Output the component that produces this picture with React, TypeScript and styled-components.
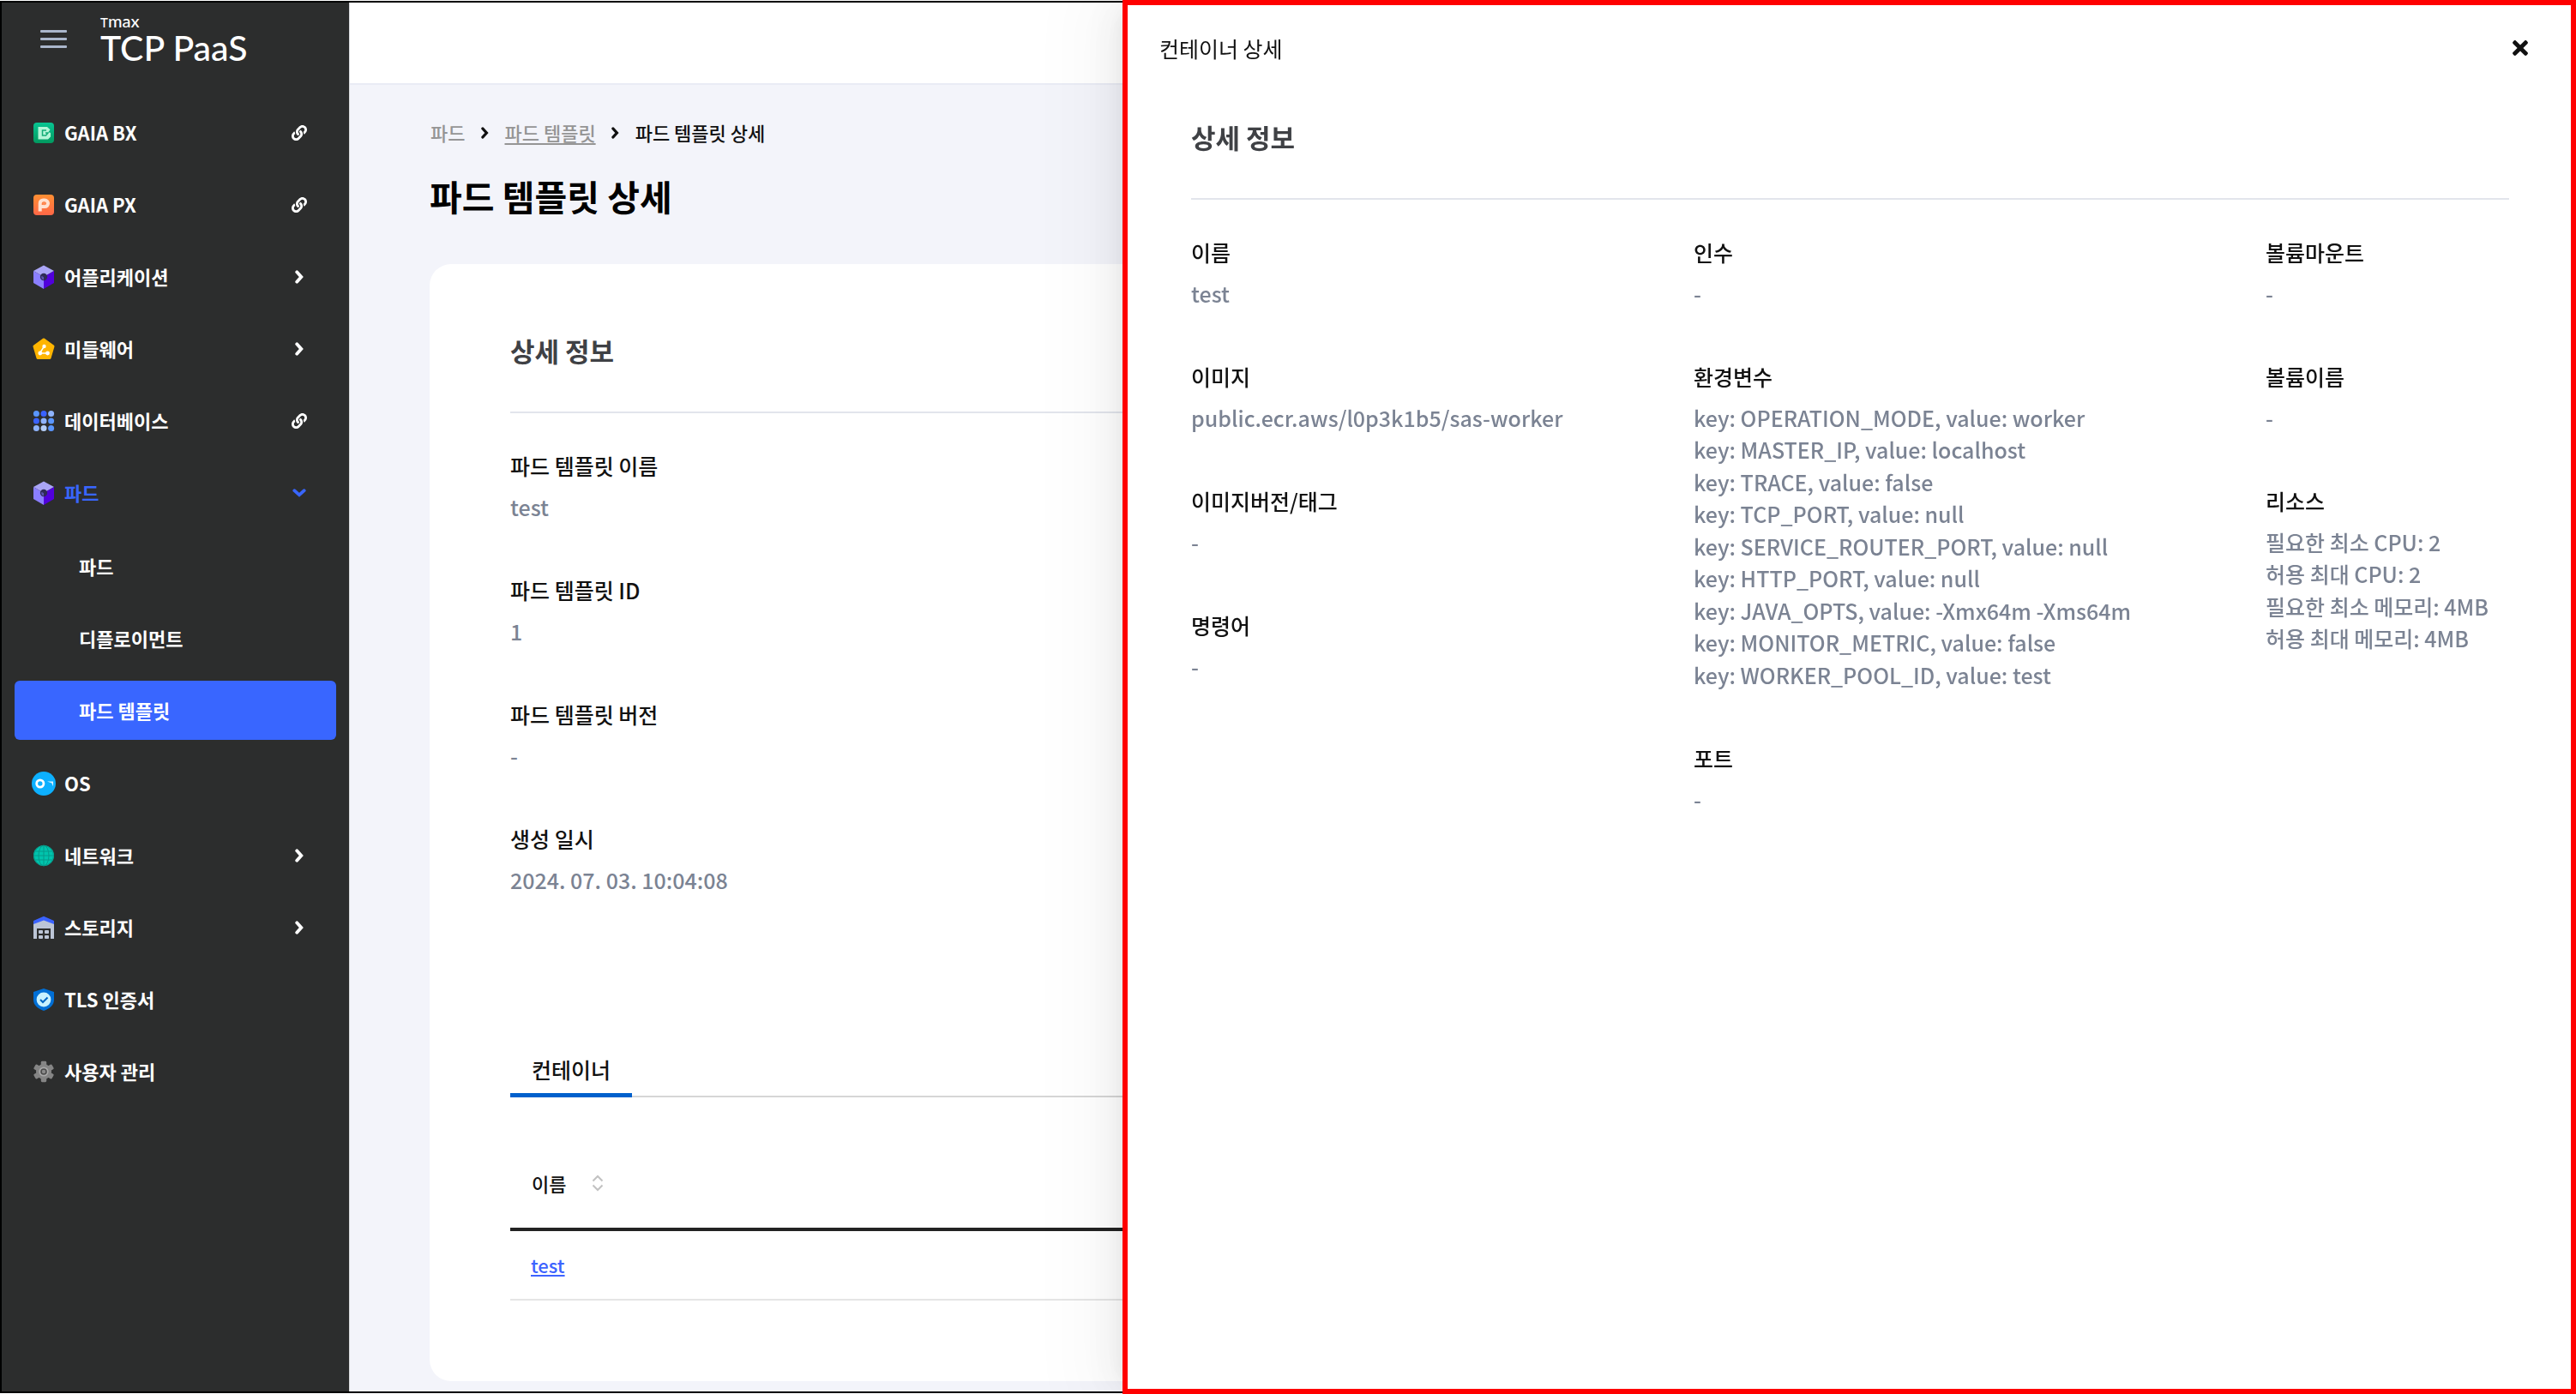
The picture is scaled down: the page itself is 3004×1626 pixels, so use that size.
import React from "react";
import styled, { createGlobalStyle } from "styled-components";
import { FaLink, FaTimes } from "react-icons/fa";

const GlobalStyle = createGlobalStyle`
  *, *::before, *::after { box-sizing: border-box; }
  body {
    margin: 0;
    background: #ffffff;
    color: #111111;
    font-family: "Noto Sans CJK KR", "Noto Sans", sans-serif;
    font-size: 25px;
    line-height: 1.5;
  }
  h1, h2, p, dl, dd, ul, ol { margin: 0; padding: 0; }
  ul, ol { list-style: none; }
  button { border: 0; padding: 0; background: none; color: inherit; font: inherit; cursor: pointer; }
`;

/* ---------- frame ---------- */

const Frame = styled.div`
  display: flex;
  min-height: calc(100vh - 2px);
  margin: 1px 0;
  border: 2px solid #000000;
  border-right: 0;
`;

/* ---------- sidebar ---------- */

const Sidebar = styled.aside`
  flex: 0 0 406px;
  padding: 0 15px;
  background: #2c2d2d;
  border-right: 1px solid #d9dadd;
  color: #ffffff;
`;

const Brand = styled.div`
  display: flex;
  align-items: flex-start;
  gap: 39px;
  padding: 11px 0 0 30px;
  height: 117px;
`;

const MenuButton = styled.button`
  display: grid;
  gap: 6px;
  width: 31px;
  margin-top: 21px;
`;

const MenuLine = styled.span`
  height: 3px;
  border-radius: 1px;
  background: #aab6cb;
`;

const Logo = styled.a`
  display: flex;
  flex-direction: column;
  color: #ffffff;
  font-family: "Lato Medium", Lato, sans-serif;
  font-weight: 500;
  text-decoration: none;
`;

const LogoSmall = styled.span`
  font-size: 20px;
  line-height: 20px;
`;

const LogoCap = styled.span`
  font-size: 15px;
`;

const LogoBig = styled.span`
  font-size: 41px;
  line-height: 40px;
`;

const NavList = styled.ul`
  display: grid;
  gap: 15px;
`;

const SubList = styled(NavList)`
  margin: 17px 0 1px;
`;

const NavRow = styled.a<{ $active?: boolean; $open?: boolean; $sub?: boolean }>`
  display: flex;
  align-items: center;
  gap: 10px;
  width: 100%;
  height: 69px;
  padding: 0 34px 0 ${(p) => (p.$sub ? 75 : 20)}px;
  border-radius: 6px;
  background: ${(p) => (p.$active ? "#3966ff" : "transparent")};
  color: ${(p) => (p.$open ? "#3966ff" : "#ffffff")};
  font-size: 22px;
  font-weight: 700;
  line-height: 33px;
  text-align: left;
  text-decoration: none;
`;

const NavLabel = styled.span`
  flex: 1;
`;

const NavMark = styled.span`
  display: flex;
  justify-content: center;
  width: 18px;
  font-size: 18px;
`;

const NavIcon = styled.svg`
  flex: none;
  width: 28px;
  height: 28px;
`;

/* ---------- main page ---------- */

const Main = styled.div`
  flex: 1;
  min-width: 0;
  background: #f3f4fa;
`;

const TopBar = styled.header`
  height: 96px;
  background: #ffffff;
  border-bottom: 2px solid #e9ebf5;
`;

const Content = styled.main`
  padding: 39px 93px 12px;
`;

const Crumbs = styled.ol`
  display: flex;
  align-items: center;
  gap: 18px;
  padding-left: 1px;
  font-size: 22px;
  font-weight: 500;
  line-height: 33px;
`;

const Crumb = styled.li<{ $muted?: boolean }>`
  color: ${(p) => (p.$muted ? "#959595" : "#111111")};
`;

const CrumbLink = styled.a`
  color: inherit;
  text-underline-offset: 3px;
`;

const CrumbMark = styled.li`
  display: flex;
  justify-content: center;
  width: 10px;
`;

const PageTitle = styled.h1`
  margin: 27px 0 49px;
  color: #000000;
  font-size: 41px;
  font-weight: 700;
  line-height: 61px;
`;

const Card = styled.section`
  padding: 78px 94px 94px;
  border-radius: 25px;
  background: #ffffff;
`;

const SectionTitle = styled.h2`
  padding-bottom: 48px;
  border-bottom: 2px solid #e2e5ec;
  color: #3f4145;
  font-size: 31px;
  font-weight: 700;
  line-height: 46px;
`;

const Details = styled.dl`
  display: grid;
  align-content: start;
  gap: 60px;
`;

const Detail = styled.div`
  display: grid;
  gap: 10px;
`;

const Term = styled.dt`
  color: #111111;
  font-weight: 500;
`;

const Value = styled.dd`
  color: #7b8393;
  font-weight: 500;
`;

const CardDetails = styled.div`
  padding-top: 43px;
`;

const Tabs = styled.div`
  display: flex;
  margin-top: 175px;
  box-shadow: inset 0 -2px #d6d6d6;
`;

const Tab = styled.button`
  padding: 8px 25px 9px;
  border-bottom: 5px solid #0060cc;
  font-weight: 500;
  line-height: 38px;
`;

const Table = styled.table`
  width: 100%;
  margin-top: 51px;
  border-collapse: separate;
  border-spacing: 0;
  font-size: 22px;
  line-height: 33px;
  text-align: left;
`;

const HeadCell = styled.th`
  height: 105px;
  padding: 0 25px 3px;
  border-bottom: 4px solid #222222;
  font-weight: 500;
`;

const SortButton = styled.button`
  display: flex;
  align-items: center;
  gap: 30px;
`;

const Cell = styled.td`
  height: 81px;
  padding: 0 24px;
  border-bottom: 2px solid #e5e5e5;
  font-weight: 500;
`;

const CellLink = styled.a`
  color: #3d63ff;
`;

/* ---------- drawer ---------- */

const Drawer = styled.aside`
  position: fixed;
  top: 0;
  right: 0;
  bottom: 0;
  width: 1695px;
  max-width: 100%;
  overflow: auto;
  border: 6px solid #ff0000;
  background: #ffffff;
  box-shadow:
    -9px 0 25px -12px rgba(0, 0, 0, 0.08),
    -14px 0 44px rgba(0, 0, 0, 0.05),
    -19px 0 75px 25px rgba(0, 0, 0, 0.03);
`;

const DrawerHead = styled.header`
  display: flex;
  align-items: center;
  justify-content: space-between;
  padding: 31px 50px 31px 37px;
  line-height: 38px;
`;

const CloseButton = styled.button`
  display: flex;
  justify-content: center;
  width: 18px;
  font-size: 26px;
`;

const DrawerBody = styled.div`
  padding: 31px 72px 31px 74px;
`;

const Columns = styled.div`
  display: grid;
  grid-template-columns: 586fr 667fr 284fr;
  padding-top: 43px;
`;

/* ---------- icons ---------- */

const Chevron = ({ height = 16, down = false }: { height?: number; down?: boolean }) => (
  <svg
    width={down ? height : (height * 10) / 16}
    height={down ? (height * 10) / 16 : height}
    viewBox={down ? "0 0 16 10" : "0 0 10 16"}
    fill="none"
    stroke="currentColor"
    strokeWidth="3.800"
    strokeLinecap="round"
    aria-hidden="true"
  >
    <path d={down ? "M2.300 2.200 8 7.300l5.700-5.100" : "M2.200 2.300 7.300 8l-5.100 5.700"} />
  </svg>
);

const BxIcon = () => (
  <NavIcon viewBox="0 0 28 28" aria-hidden="true">
    <defs>
      <linearGradient id="bx" x1="0" y1="0" x2="0" y2="1">
        <stop offset="0" stopColor="#08c592" />
        <stop offset="1" stopColor="#02995f" />
      </linearGradient>
    </defs>
    <rect x="2" y="2" width="24" height="24" rx="4" fill="url(#bx)" />
    <path d="M7.500 7H18l3.500 3.300-2 2.700 2.500 1v4.500L19 21.500H7.500z" fill="#b4f6d8" />
    <path d="M17 11h-4.500v6h4l2.500-3h-3" fill="none" stroke="#14ad77" strokeWidth="1.500" />
  </NavIcon>
);

const PxIcon = () => (
  <NavIcon viewBox="0 0 28 28" aria-hidden="true">
    <defs>
      <linearGradient id="px" x1="0" y1="0" x2="0" y2="1">
        <stop offset="0" stopColor="#ff8f33" />
        <stop offset="1" stopColor="#ff6747" />
      </linearGradient>
    </defs>
    <rect x="2" y="2" width="24" height="24" rx="4" fill="url(#px)" />
    <path d="M9.700 21.500V12a3.500 3.500 0 0 1 3.500-3.500h2a3.800 3.800 0 0 1 0 7.600h-5" fill="none" stroke="#ffe1d0" strokeWidth="4" />
    <circle cx="14.500" cy="12.200" r="2" fill="#ff8a55" />
  </NavIcon>
);

const CubeIcon = () => (
  <NavIcon viewBox="0 0 28 28" aria-hidden="true">
    <path d="M14 0.400 26 7 14 14 2 7z" fill="#aaa5f6" />
    <path d="M2 7l12 7v14L2 21z" fill="#8b7fff" />
    <path d="M26 7l-12 7v14l12-7z" fill="#5100dc" />
    <circle cx="14" cy="14" r="4.200" fill="#2e2b55" />
    <path d="M11.500 12.700l2.500 1.500v3.300a3.400 3.400 0 0 1-2.500-4.800z" fill="#5b53b0" />
  </NavIcon>
);

const MiddlewareIcon = () => (
  <NavIcon viewBox="0 0 28 28" aria-hidden="true">
    <path d="M14 3 25 11 21 24.500H7L3 11z" fill="#ffb500" stroke="#ffb500" strokeWidth="3" strokeLinejoin="round" />
    <path d="M14.500 11 10 18M10.500 19h8" fill="none" stroke="#ffffff" strokeWidth="1.400" />
    <circle cx="14.500" cy="11" r="2.200" fill="#ffffff" />
    <circle cx="9.800" cy="19" r="2.400" fill="#ffffff" />
    <circle cx="18.500" cy="19" r="2.400" fill="#ffffff" />
  </NavIcon>
);

const dotColors = ["#5a96ff", "#3a62ff", "#8fb3fb", "#3a62ff", "#8fb3fb", "#5a96ff", "#8fb3fb", "#b5cff8", "#5a96ff"];

const DatabaseIcon = () => (
  <NavIcon viewBox="0 0 28 28" aria-hidden="true">
    {dotColors.map((fill, i) => (
      <circle key={i} cx={5.400 + (i % 3) * 8.600} cy={5.400 + Math.floor(i / 3) * 8.600} r="3.500" fill={fill} />
    ))}
  </NavIcon>
);

const OsIcon = () => (
  <NavIcon viewBox="0 0 28 28" aria-hidden="true">
    <circle cx="14" cy="14" r="14" fill="#0db0ff" />
    <circle cx="9.800" cy="14" r="4.100" fill="none" stroke="#ffffff" strokeWidth="2.800" />
    <path d="M18 11.500h7v5.500c-.8-1.500-1.200-2.500-1.600-3.600z" fill="#d9f2ff" />
  </NavIcon>
);

const NetworkIcon = () => (
  <NavIcon viewBox="0 0 28 28" aria-hidden="true">
    <circle cx="14" cy="14" r="12" fill="#00c4ad" />
    <g fill="none" stroke="#059a8a" strokeWidth="1">
      <path d="M14 2v24M3.500 9h21M2 14h24M3.500 19h21" />
      <ellipse cx="14" cy="14" rx="6" ry="12" />
      <circle cx="14" cy="14" r="11.500" />
    </g>
  </NavIcon>
);

const StorageIcon = () => (
  <NavIcon viewBox="0 0 28 28" aria-hidden="true">
    <path d="M2 8.500 14 4l12 4.500V27h-4V15H6v12H2z" fill="#bcc5d6" />
    <path d="M2 6 14 .8 26 6v4L14 5.500 2 10z" fill="#3a62ff" />
    <g fill="#bcc5d6">
      <rect x="8" y="17" width="5" height="4" rx="1" />
      <rect x="15" y="17" width="5" height="4" rx="1" />
      <rect x="8" y="23" width="5" height="4" rx="1" />
      <rect x="15" y="23" width="5" height="4" rx="1" />
    </g>
  </NavIcon>
);

const TlsIcon = () => (
  <NavIcon viewBox="0 0 28 28" aria-hidden="true">
    <path d="M14 1l12 4v9c0 6.500-5 10.500-12 13C7 24.500 2 20.500 2 14V5z" fill="#006fd6" />
    <circle cx="14" cy="14" r="8.400" fill="#c8f1ff" />
    <path d="M10 14l3 3 5.500-5.500" fill="none" stroke="#0066c4" strokeWidth="2" />
  </NavIcon>
);

const GearIcon = () => (
  <NavIcon viewBox="0 0 28 28" aria-hidden="true">
    <g fill="#858585">
      <circle cx="14" cy="14" r="9" />
      {[0, 60, 120].map((angle) => (
        <rect key={angle} x="10.800" y="1.800" width="6.400" height="24.400" rx="1.400" transform={`rotate(${angle} 14 14)`} />
      ))}
    </g>
    <circle cx="14" cy="14" r="5.600" fill="#a9a9a9" />
    <circle cx="14" cy="14" r="3" fill="#8a8a8a" stroke="#4b4b4b" strokeWidth="1.600" />
  </NavIcon>
);

const SortIcon = () => (
  <svg width="14" height="20" viewBox="0 0 14 20" fill="none" stroke="#c2c2c2" strokeWidth="2" aria-hidden="true">
    <path d="M1.500 7.500 7 2l5.500 5.500M1.500 12.500 7 18l5.500-5.500" />
  </svg>
);

/* ---------- data ---------- */

type NavItem = {
  label: string;
  Icon: React.FC;
  mark?: "link" | "more";
  children?: { label: string; active?: boolean }[];
};

const navItems: NavItem[] = [
  { label: "GAIA BX", Icon: BxIcon, mark: "link" },
  { label: "GAIA PX", Icon: PxIcon, mark: "link" },
  { label: "어플리케이션", Icon: CubeIcon, mark: "more" },
  { label: "미들웨어", Icon: MiddlewareIcon, mark: "more" },
  { label: "데이터베이스", Icon: DatabaseIcon, mark: "link" },
  {
    label: "파드",
    Icon: CubeIcon,
    mark: "more",
    children: [{ label: "파드" }, { label: "디플로이먼트" }, { label: "파드 템플릿", active: true }],
  },
  { label: "OS", Icon: OsIcon },
  { label: "네트워크", Icon: NetworkIcon, mark: "more" },
  { label: "스토리지", Icon: StorageIcon, mark: "more" },
  { label: "TLS 인증서", Icon: TlsIcon },
  { label: "사용자 관리", Icon: GearIcon },
];

type DetailData = { term: string; values: string[] };

const templateDetails: DetailData[] = [
  { term: "파드 템플릿 이름", values: ["test"] },
  { term: "파드 템플릿 ID", values: ["1"] },
  { term: "파드 템플릿 버전", values: ["-"] },
  { term: "생성 일시", values: ["2024. 07. 03. 10:04:08"] },
];

const containerColumns: DetailData[][] = [
  [
    { term: "이름", values: ["test"] },
    { term: "이미지", values: ["public.ecr.aws/l0p3k1b5/sas-worker"] },
    { term: "이미지버전/태그", values: ["-"] },
    { term: "명령어", values: ["-"] },
  ],
  [
    { term: "인수", values: ["-"] },
    {
      term: "환경변수",
      values: [
        "key: OPERATION_MODE, value: worker",
        "key: MASTER_IP, value: localhost",
        "key: TRACE, value: false",
        "key: TCP_PORT, value: null",
        "key: SERVICE_ROUTER_PORT, value: null",
        "key: HTTP_PORT, value: null",
        "key: JAVA_OPTS, value: -Xmx64m -Xms64m",
        "key: MONITOR_METRIC, value: false",
        "key: WORKER_POOL_ID, value: test",
      ],
    },
    { term: "포트", values: ["-"] },
  ],
  [
    { term: "볼륨마운트", values: ["-"] },
    { term: "볼륨이름", values: ["-"] },
    {
      term: "리소스",
      values: ["필요한 최소 CPU: 2", "허용 최대 CPU: 2", "필요한 최소 메모리: 4MB", "허용 최대 메모리: 4MB"],
    },
  ],
];

/* ---------- components ---------- */

const DetailList = ({ items }: { items: DetailData[] }) => (
  <Details>
    {items.map(({ term, values }) => (
      <Detail key={term}>
        <Term>{term}</Term>
        <Value>
          {values.map((value) => (
            <p key={value}>{value}</p>
          ))}
        </Value>
      </Detail>
    ))}
  </Details>
);

const NavEntry = ({ label, Icon, mark, children }: NavItem) => {
  const open = Boolean(children);
  const content = (
    <>
      <Icon />
      <NavLabel>{label}</NavLabel>
      {mark && <NavMark>{mark === "link" ? <FaLink /> : <Chevron down={open} />}</NavMark>}
    </>
  );
  return (
    <li>
      {mark === "more" ? (
        <NavRow as="button" type="button" aria-expanded={open} $open={open}>
          {content}
        </NavRow>
      ) : (
        <NavRow href="#">{content}</NavRow>
      )}
      {children && (
        <SubList>
          {children.map((child) => (
            <li key={child.label}>
              <NavRow href="#" $sub $active={child.active}>
                <NavLabel>{child.label}</NavLabel>
              </NavRow>
            </li>
          ))}
        </SubList>
      )}
    </li>
  );
};

export default function App() {
  return (
    <>
      <GlobalStyle />
      <Frame>
        <Sidebar>
          <Brand>
            <MenuButton type="button" aria-label="메뉴">
              <MenuLine />
              <MenuLine />
              <MenuLine />
            </MenuButton>
            <Logo href="#">
              <LogoSmall>
                <LogoCap>T</LogoCap>max
              </LogoSmall>
              <LogoBig>TCP PaaS</LogoBig>
            </Logo>
          </Brand>
          <nav>
            <NavList>
              {navItems.map((item) => (
                <NavEntry key={item.label} {...item} />
              ))}
            </NavList>
          </nav>
        </Sidebar>
        <Main>
          <TopBar />
          <Content>
            <Crumbs>
              <Crumb $muted>파드</Crumb>
              <CrumbMark>
                <Chevron height={14} />
              </CrumbMark>
              <Crumb $muted>
                <CrumbLink href="#">파드 템플릿</CrumbLink>
              </Crumb>
              <CrumbMark>
                <Chevron height={14} />
              </CrumbMark>
              <Crumb>파드 템플릿 상세</Crumb>
            </Crumbs>
            <PageTitle>파드 템플릿 상세</PageTitle>
            <Card>
              <SectionTitle>상세 정보</SectionTitle>
              <CardDetails>
                <DetailList items={templateDetails} />
              </CardDetails>
              <Tabs role="tablist">
                <Tab type="button" role="tab" aria-selected="true">
                  컨테이너
                </Tab>
              </Tabs>
              <Table>
                <thead>
                  <tr>
                    <HeadCell scope="col">
                      <SortButton type="button">
                        이름
                        <SortIcon />
                      </SortButton>
                    </HeadCell>
                  </tr>
                </thead>
                <tbody>
                  <tr>
                    <Cell>
                      <CellLink href="#">test</CellLink>
                    </Cell>
                  </tr>
                </tbody>
              </Table>
            </Card>
          </Content>
        </Main>
      </Frame>
      <Drawer aria-label="컨테이너 상세">
        <DrawerHead>
          <span>컨테이너 상세</span>
          <CloseButton type="button" aria-label="닫기">
            <FaTimes />
          </CloseButton>
        </DrawerHead>
        <DrawerBody>
          <SectionTitle>상세 정보</SectionTitle>
          <Columns>
            {containerColumns.map((items) => (
              <DetailList key={items[0].term} items={items} />
            ))}
          </Columns>
        </DrawerBody>
      </Drawer>
    </>
  );
}
